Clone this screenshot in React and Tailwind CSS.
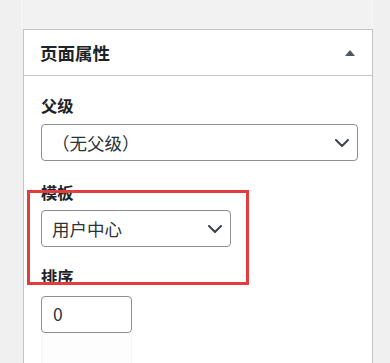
import React from 'react';

const Chevron = () => (
  <svg width="14" height="8" viewBox="0 0 14 8" className="shrink-0">
    <polyline points="1,1 7,7 13,1" fill="none" stroke="#3c434a" strokeWidth="2" strokeLinecap="round" strokeLinejoin="round" />
  </svg>
);

const SelectBox = ({ value, width }) => (
  <div className={`flex h-[37px] items-center justify-between rounded-[4px] border border-[#8c8f94] bg-white pl-[10px] pr-[8px] ${width}`}>
    <span className="text-[17.5px] leading-none text-[#2c3338]">{value}</span>
    <Chevron />
  </div>
);

const App = () => {
  return (
    <div
      className="relative h-[363px] w-[390px] overflow-hidden bg-[#f0f0f1]"
      style={{ fontFamily: '"Microsoft YaHei", "Noto Sans CJK SC", "Noto Sans", sans-serif' }}
    >
      {/* previous box remnant */}
      <div className="ml-[21px] h-[29px] w-[352px] border-x border-[#f6f6f6] bg-[#f2f2f2]" />

      {/* Page attributes box */}
      <div className="ml-[23px] h-[400px] w-[350px] border border-[#c3c4c7] bg-white">
        <div className="flex h-[46px] items-center justify-between border-b border-[#c3c4c7] pl-[16px] pr-[17px]">
          <h2 className="text-[17.5px] font-semibold leading-none text-[#1d2327]">页面属性</h2>
          <svg width="10" height="6" viewBox="0 0 10 6">
            <polygon points="5,0 10,6 0,6" fill="#50575e" />
          </svg>
        </div>

        <div className="pl-[17px] pt-[18px]">
          <p className="mb-[8px] text-[16.25px] font-semibold leading-[22px] text-[#1d2327]">父级</p>
          <SelectBox value="（无父级）" width="w-[317px]" />

          <p className="mb-[7px] mt-[20px] text-[16.25px] font-semibold leading-[22px] text-[#1d2327]">模板</p>
          <SelectBox value="用户中心" width="w-[190px]" />

          <p className="mb-[9px] mt-[18px] text-[16.25px] font-semibold leading-[22px] text-[#1d2327]">排序</p>
          <div className="flex h-[37px] w-[91px] items-center rounded-[4px] border border-[#8c8f94] bg-white pl-[11px] text-[17.5px] text-[#2c3338]">
            0
          </div>
          <div className="h-[40px] w-[91px] border-x border-[#f5f5f5] bg-[#fdfdfd]" />
        </div>
      </div>

      {/* annotation frame */}
      <div className="pointer-events-none absolute left-[27px] top-[190px] h-[95px] w-[222px] border-[3px] border-[#e23c3f]" />
    </div>
  );
};

export default App;
